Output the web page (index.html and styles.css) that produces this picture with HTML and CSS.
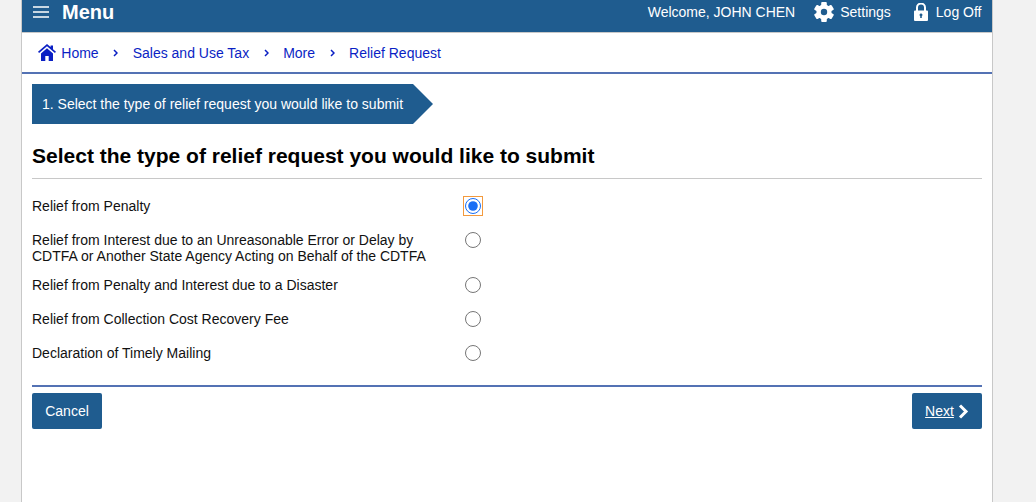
FILE: index.html
```html
<!DOCTYPE html>
<html lang="en">
<head>
    <meta charset="UTF-8">
    <title>Relief Request</title>
    <link rel="stylesheet" href="styles.css">
</head>
<body>
    <div class="page">
        <header class="topbar">
            <a class="menu-link" href="#">
                <svg class="menu-icon" viewBox="0 0 16 12" width="16" height="12"><path d="M0 1h16M0 6h16M0 11h16" stroke="#fff" stroke-width="1.6"/></svg>
                <span>Menu</span>
            </a>
            <div class="user-links">
                <span class="welcome">Welcome, JOHN CHEN</span>
                <a class="top-link settings" href="#">
                    <svg viewBox="0 0 20 20" width="20" height="20">
                        <circle cx="10" cy="10" r="7.6" fill="#fff"/>
                        <rect x="7.200" y="0" width="5.600" height="20" rx="1" fill="#fff"/>
                        <rect x="7.200" y="0" width="5.600" height="20" rx="1" fill="#fff" transform="rotate(60 10 10)"/>
                        <rect x="7.200" y="0" width="5.600" height="20" rx="1" fill="#fff" transform="rotate(120 10 10)"/>
                        <circle cx="10" cy="10" r="3.200" fill="#1f5c8f"/>
                    </svg>
                    <span>Settings</span>
                </a>
                <a class="top-link logoff" href="#">
                    <svg viewBox="0 0 14 18" width="14" height="18"><path fill="none" stroke="#fff" stroke-width="2" d="M3 8V4.500a4 4 0 0 1 8 0V8"/><path fill="#fff" fill-rule="evenodd" d="M1 7.500h12a1 1 0 0 1 1 1V17a1 1 0 0 1-1 1H1a1 1 0 0 1-1-1V8.500a1 1 0 0 1 1-1zM7 10.500a1.400 1.400 0 0 0-.8 2.600V15h1.600v-1.900A1.400 1.400 0 0 0 7 10.500z"/></svg>
                    <span>Log Off</span>
                </a>
            </div>
        </header>

        <nav class="breadcrumb">
            <svg class="home-icon" viewBox="0 0 18 17" width="18" height="17"><path fill="#0a1fc4" d="M9 0 0 7.800l1.100 1.300L9 2.300l7.900 6.800L18 7.800l-3-2.600V1.500h-2.400v1.600z"/><path fill="#0a1fc4" fill-rule="evenodd" d="M9 4.200 3 9.400V17h4.300v-5h3.400v5H15V9.400z"/></svg>
            <a href="#">Home</a>
            <svg class="crumb-sep" viewBox="0 0 5 8" width="5" height="8"><path d="M1 1l3 3-3 3" fill="none" stroke="#0a1fc4" stroke-width="1.500"/></svg>
            <a href="#">Sales and Use Tax</a>
            <svg class="crumb-sep" viewBox="0 0 5 8" width="5" height="8"><path d="M1 1l3 3-3 3" fill="none" stroke="#0a1fc4" stroke-width="1.500"/></svg>
            <a href="#">More</a>
            <svg class="crumb-sep" viewBox="0 0 5 8" width="5" height="8"><path d="M1 1l3 3-3 3" fill="none" stroke="#0a1fc4" stroke-width="1.500"/></svg>
            <a href="#">Relief Request</a>
        </nav>

        <main class="content">
            <div class="step-arrow">1. Select the type of relief request you would like to submit</div>
            <h1 class="page-title">Select the type of relief request you would like to submit</h1>

            <form class="relief-form">
                <div class="option">
                    <label for="r1">Relief from Penalty</label>
                    <span class="radio-wrap focused"><input type="radio" id="r1" name="relief" checked></span>
                </div>
                <div class="option option-tall">
                    <label for="r2">Relief from Interest due to an Unreasonable Error or Delay by<br>CDTFA or Another State Agency Acting on Behalf of the CDTFA</label>
                    <span class="radio-wrap"><input type="radio" id="r2" name="relief"></span>
                </div>
                <div class="option">
                    <label for="r3">Relief from Penalty and Interest due to a Disaster</label>
                    <span class="radio-wrap"><input type="radio" id="r3" name="relief"></span>
                </div>
                <div class="option">
                    <label for="r4">Relief from Collection Cost Recovery Fee</label>
                    <span class="radio-wrap"><input type="radio" id="r4" name="relief"></span>
                </div>
                <div class="option">
                    <label for="r5">Declaration of Timely Mailing</label>
                    <span class="radio-wrap"><input type="radio" id="r5" name="relief"></span>
                </div>

                <div class="form-actions">
                    <button type="button" class="btn">Cancel</button>
                    <button type="button" class="btn btn-next">
                        <span class="btn-next-label">Next</span>
                        <svg viewBox="0 0 12 15" width="12" height="15"><path d="M3 1.500 9 7.500 3 13.500" fill="none" stroke="#fff" stroke-width="3"/></svg>
                    </button>
                </div>
            </form>
        </main>
    </div>
</body>
</html>
```

FILE: styles.css
```css
html, body {
    height: 100%;
}
body {
    margin: 0;
    background-color: #f2f2f2;
    font-family: "Liberation Sans", Arial, sans-serif;
    font-size: 14px;
    color: #111;
    overflow: hidden;
}
.page {
    box-sizing: border-box;
    width: 972px;
    height: 502px;
    margin-left: 21px;
    background-color: white;
    border-left: 1px solid #c8c8c8;
    border-right: 1px solid #c8c8c8;
}
.topbar {
    display: flex;
    justify-content: space-between;
    align-items: center;
    height: 32px;
    padding: 0 10.500px 0 11px;
    background-color: #1f5c8f;
    color: white;
}
.menu-link {
    display: flex;
    align-items: center;
    gap: 13px;
    margin-top: -8px;
    color: white;
    text-decoration: none;
    font-size: 20px;
    font-weight: bold;
}
.user-links {
    display: flex;
    align-items: center;
    margin-top: -8px;
}
.top-link {
    display: flex;
    align-items: center;
    color: white;
    text-decoration: none;
}
.settings {
    gap: 6px;
    margin-left: 19px;
}
.logoff {
    gap: 8px;
    margin-left: 23px;
}
.breadcrumb {
    display: flex;
    align-items: center;
    box-sizing: border-box;
    height: 42px;
    padding: 0 16px;
    border-top: 1px solid #c8c8c8;
    border-bottom: 2px solid #5472b4;
}
.breadcrumb a {
    color: #0a1fc4;
    text-decoration: none;
}
.home-icon {
    margin-right: 5.300px;
}
.crumb-sep {
    margin: 0 14.500px;
}
.content {
    padding: 10px 10px 0;
}
.step-arrow {
    box-sizing: border-box;
    width: 401px;
    height: 40px;
    padding-left: 10px;
    line-height: 40px;
    background-color: #1f5c8f;
    color: white;
    clip-path: polygon(0 0, 381px 0, 100% 50%, 381px 100%, 0 100%);
}
.page-title {
    margin: 20px 0 10px;
    padding-bottom: 11px;
    border-bottom: 1px solid #c8c8c8;
    font-size: 21px;
    line-height: 23px;
    color: black;
}
.option {
    display: flex;
    align-items: center;
    min-height: 34px;
}
.option label {
    width: 432px;
}
.option-tall {
    align-items: flex-start;
    min-height: 45px;
    padding-top: 8px;
    box-sizing: border-box;
}
.option-tall label {
    padding-top: 1px;
    line-height: 16px;
}
.radio-wrap {
    display: flex;
    justify-content: center;
    align-items: center;
    width: 18px;
    height: 18px;
}
.radio-wrap input {
    width: 16px;
    height: 16px;
    margin: 0;
    accent-color: #1a6ef5;
}
.focused {
    outline: 1px solid #f39a3e;
}
.form-actions {
    display: flex;
    justify-content: space-between;
    margin-top: 15px;
    padding-top: 6px;
    border-top: 2px solid #5472b4;
}
.btn {
    display: flex;
    align-items: center;
    justify-content: center;
    gap: 3px;
    width: 70px;
    height: 36px;
    padding: 0;
    border: none;
    border-radius: 2px;
    background-color: #1f5c8f;
    color: white;
    font-family: inherit;
    font-size: 14px;
}
.btn-next-label {
    text-decoration: underline;
}
```
